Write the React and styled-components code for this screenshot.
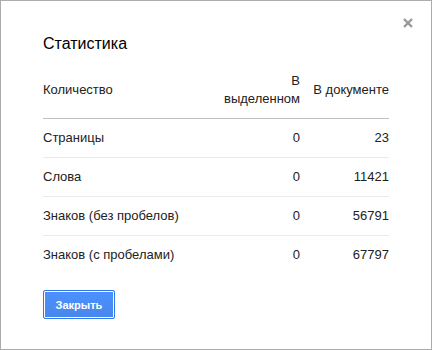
import React from "react";
import styled, { createGlobalStyle } from "styled-components";

const GlobalStyle = createGlobalStyle`
  html, body {
    margin: 0;
    padding: 0;
    background: #fff;
  }
  * {
    box-sizing: border-box;
  }
`;

const Dialog = styled.div`
  position: relative;
  width: 432px;
  height: 350px;
  border: 1px solid #acacac;
  background: #fff;
  padding: 33px 42px 0 42px;
  font-family: "Liberation Sans", Arial, sans-serif;
  color: #222;
`;

const CloseButton = styled.button`
  position: absolute;
  top: 16px;
  right: 17px;
  width: 12px;
  height: 12px;
  padding: 0;
  border: 0;
  background: none;
  cursor: pointer;
  display: flex;
`;

const Title = styled.h2`
  margin: 0 0 18px;
  font-size: 16px;
  font-weight: normal;
  line-height: 20px;
  color: #000;
`;

const Row = styled.div`
  display: grid;
  grid-template-columns: 1fr 80px 89px;
  align-items: center;
  height: ${(p) => p.$height}px;
  padding-bottom: ${(p) => p.$padBottom || 0}px;
  border-bottom: 1px solid ${(p) => (p.$last ? "transparent" : p.$strong ? "#c0c0c0" : "#ebebeb")};
  font-size: 13px;
  line-height: 18px;
`;

const Label = styled.div`
  text-align: left;
`;

const Num = styled.div`
  text-align: right;
`;

const Footer = styled.div`
  margin-top: 15px;
  display: flex;
`;

const PrimaryButton = styled.button`
  width: 72px;
  height: 29px;
  border: 1px solid #3079ed;
  border-radius: 2px;
  background: linear-gradient(#4d90fe, #4787ed);
  box-shadow: inset 0 0 0 1px #fff;
  color: #fff;
  font-family: "Liberation Sans", Arial, sans-serif;
  font-size: 11px;
  font-weight: bold;
  cursor: pointer;
`;

const rows = [
  ["Страницы", 0, 23],
  ["Слова", 0, 11421],
  ["Знаков (без пробелов)", 0, 56791],
  ["Знаков (с пробелами)", 0, 67797],
];

export default function App() {
  return (
    <>
      <GlobalStyle />
      <Dialog>
        <CloseButton aria-label="Закрыть">
          <svg width="12" height="12" viewBox="0 0 12 12">
            <path d="M2 2 L10 10 M10 2 L2 10" stroke="#999" strokeWidth="2.4" />
          </svg>
        </CloseButton>
        <Title>Статистика</Title>
        <Row $height={47} $padBottom={10} $strong>
          <Label>Количество</Label>
          <Num>В выделенном</Num>
          <Num>В документе</Num>
        </Row>
        {rows.map(([name, sel, doc], i) => (
          <Row key={name} $height={39} $last={i === rows.length - 1}>
            <Label>{name}</Label>
            <Num>{sel}</Num>
            <Num>{doc}</Num>
          </Row>
        ))}
        <Footer>
          <PrimaryButton>Закрыть</PrimaryButton>
        </Footer>
      </Dialog>
    </>
  );
}
